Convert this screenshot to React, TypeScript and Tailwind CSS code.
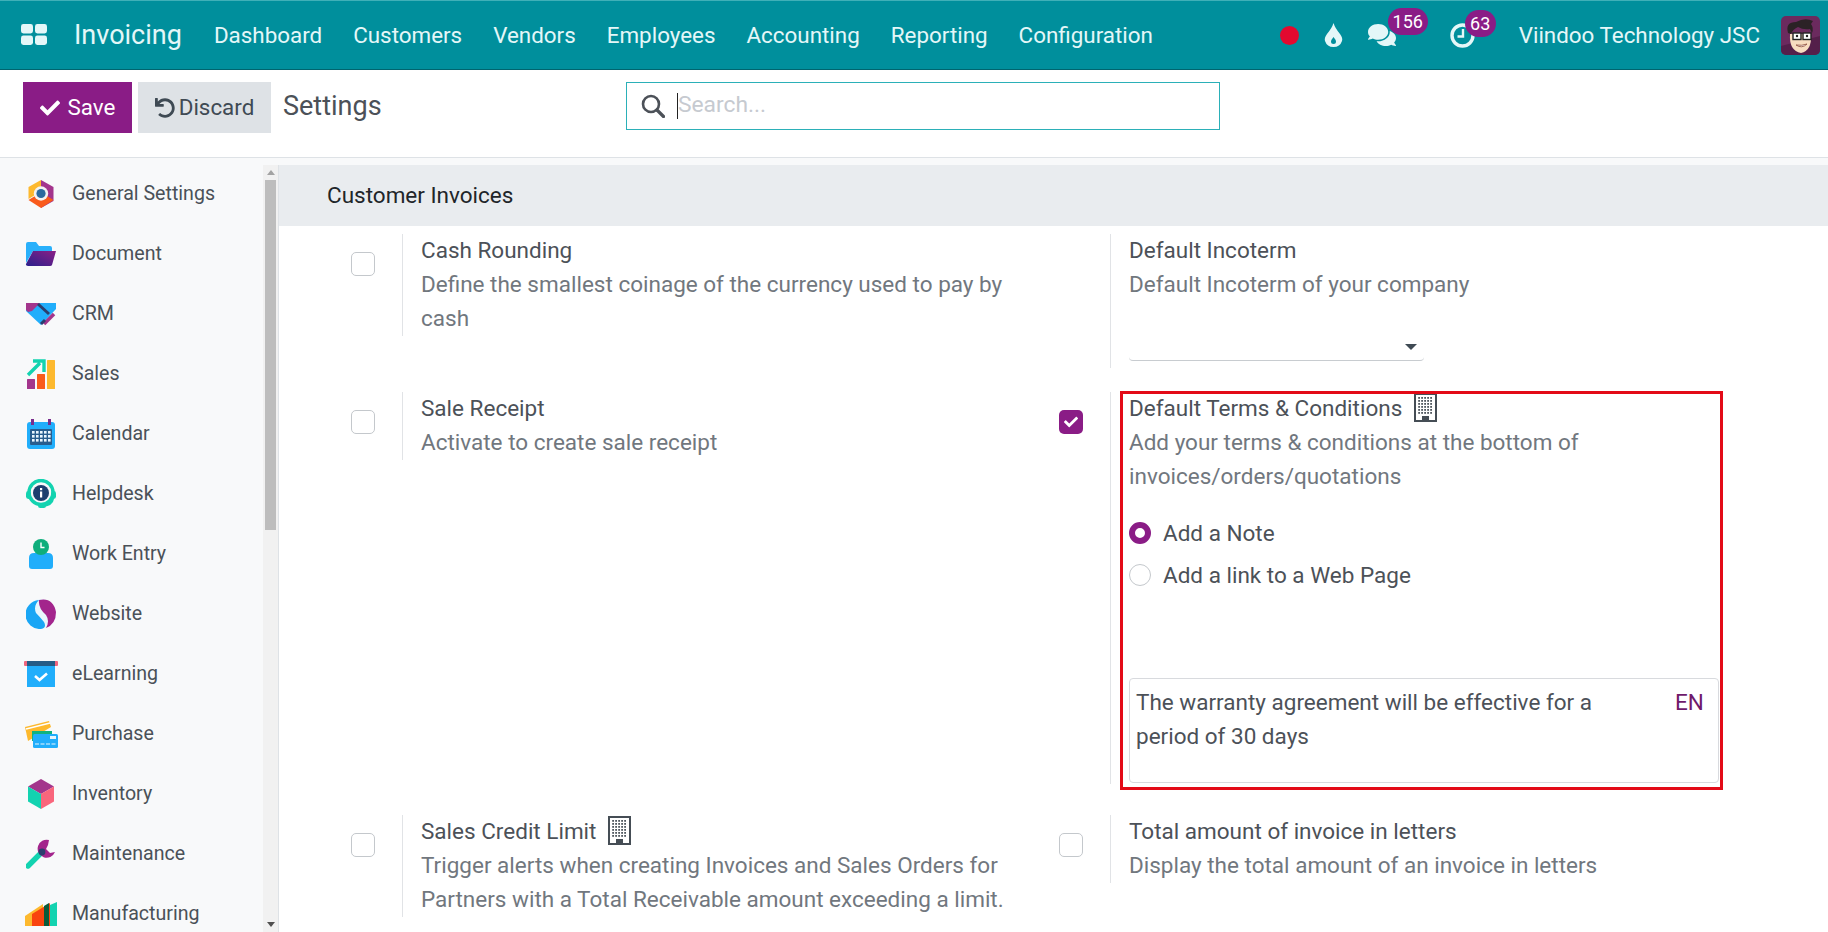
import React from "react";
import { FaCheck, FaUndo, FaComments } from "react-icons/fa";

const Building = () => (
  <svg viewBox="0 0 23 29" className="w-[23px] h-[29px] shrink-0">
    <rect x="1" y="1" width="21" height="27" fill="#fff" stroke="#454d55" strokeWidth="2" />
    {[4, 7, 10, 13, 16, 19].map((y) =>
      [5, 8, 11, 14, 17].map((x) => <rect key={`${x}-${y}`} x={x - 0.8} y={y} width="1.8" height="1.8" fill="#50585f" />)
    )}
    <rect x="8" y="23" width="7" height="5" fill="#454d55" />
  </svg>
);

const GeneralIcon = () => (
  <svg viewBox="0 0 30 30" className="w-[30px] h-[30px]">
    <path d="M15 1 L27.5 8 V22 L15 29 Z" fill="#a3358c" />
    <path d="M15 1 L2.5 8 V20 L9 16 L15 8 Z" fill="#fdb92e" />
    <path d="M2.5 21 L15 29 L27.5 21 L21 17 H9 Z" fill="#f95b1c" />
    <circle cx="15" cy="14.5" r="7.2" fill="#f3f3f3" />
    <circle cx="15" cy="14.5" r="4.6" fill="#2b6a9f" />
  </svg>
);
const DocIcon = () => (
  <svg viewBox="0 0 32 26" className="w-[32px] h-[26px]">
    <defs>
      <linearGradient id="dg" x1="0" x2="1" y1="1" y2="0">
        <stop offset="0" stopColor="#2a1f8c" />
        <stop offset="1" stopColor="#8a1f86" />
      </linearGradient>
    </defs>
    <path d="M1 3 Q1 1 3 1 H11 L14 5 H25 Q27 5 27 7 V10 H8 L1 22 Z" fill="#29b0fb" />
    <path d="M8 10 H31 L27 24 Q26.5 25 25 25 H3 Q0.5 25 1 23 Z" fill="url(#dg)" />
  </svg>
);
const CrmIcon = () => (
  <svg viewBox="0 0 30 24" className="w-[30px] h-[24px]">
    <path d="M0 1 H30 V7 L15 23 L0 9 Z" fill="#21aefb" />
    <path d="M0 1 H14 L6 9 L2 10 L0 8 Z" fill="#a3358c" />
    <path d="M12 2 L23 12" stroke="#2c3e6d" strokeWidth="3" />
    <path d="M18 22 L28 12" stroke="#a3358c" strokeWidth="3.5" />
    <path d="M15 22 L19 18" stroke="#2c3e6d" strokeWidth="3" />
  </svg>
);
const SalesIcon = () => (
  <svg viewBox="0 0 30 30" className="w-[30px] h-[30px]">
    <rect x="1" y="20" width="8" height="10" rx="0.5" fill="#a3358c" />
    <rect x="11" y="15" width="8" height="15" rx="0.5" fill="#f95b1c" />
    <rect x="21" y="1" width="8" height="29" rx="0.5" fill="#fdb92e" />
    <path d="M2 16 L14 4 M7 2 H18 V13" fill="none" stroke="#13d3b0" strokeWidth="3.4" />
  </svg>
);
const CalendarIcon = () => (
  <svg viewBox="0 0 30 30" className="w-[30px] h-[30px]">
    <rect x="1" y="3" width="28" height="27" rx="3" fill="#21aefb" />
    <rect x="5" y="0" width="3" height="6" fill="#7a2c8c" />
    <rect x="22" y="0" width="3" height="6" fill="#7a2c8c" />
    <rect x="4" y="10" width="22" height="16" rx="1" fill="#285d8e" />
    {[12, 16, 20].map((y) =>
      [6, 10, 14, 18, 22].map((x) => <rect key={`${x}-${y}`} x={x} y={y} width="2.6" height="2.6" fill="#eaf6ff" />)
    )}
  </svg>
);
const HelpIcon = () => (
  <svg viewBox="0 0 30 30" className="w-[30px] h-[30px]">
    <circle cx="15" cy="13.5" r="12" fill="none" stroke="#13d3b0" strokeWidth="3.4" />
    <rect x="0" y="12" width="5" height="8" rx="2.4" fill="#13d3b0" />
    <rect x="25" y="12" width="5" height="8" rx="2.4" fill="#13d3b0" />
    <path d="M27 19 Q26 26 16 27" fill="none" stroke="#13d3b0" strokeWidth="2.5" />
    <rect x="12" y="24.5" width="8" height="4.5" rx="2.2" fill="#13d3b0" />
    <circle cx="15" cy="14" r="8" fill="#1c3f6e" />
    <rect x="14" y="12.5" width="2.2" height="6" fill="#fff" />
    <rect x="14" y="9" width="2.2" height="2.2" fill="#fff" />
  </svg>
);
const WorkIcon = () => (
  <svg viewBox="0 0 30 32" className="w-[30px] h-[32px]">
    <path d="M3 20 Q3 15 8 15 H22 Q27 15 27 20 V28 Q27 31 24 31 H6 Q3 31 3 28 Z" fill="#21aefb" />
    <circle cx="15" cy="9" r="8" fill="#0fae7c" />
    <path d="M15 4.5 V9.5 H18.5" fill="none" stroke="#fff" strokeWidth="1.4" />
  </svg>
);
const WebIcon = () => (
  <svg viewBox="0 0 30 30" className="w-[30px] h-[30px]">
    <circle cx="15" cy="15" r="15" fill="#e8f6fd" />
    <path d="M13 1 A14.5 14.5 0 0 0 15 30 Q21 29 18 23 Q14 18 10 14 Q7 7 13 1 Z" fill="#19a6f5" />
    <path d="M13 1 Q27 -2 30 13 Q30 25 20 29 Q24 22 20 16 Q12 9 13 1 Z" fill="#a3258c" />
  </svg>
);
const LearnIcon = () => (
  <svg viewBox="0 0 34 26" className="w-[34px] h-[26px]">
    <rect x="3" y="3" width="28" height="23" fill="#21aefb" />
    <rect x="0" y="0" width="34" height="5" rx="1" fill="#f0667e" />
    <rect x="3" y="0" width="28" height="5" fill="#255c86" />
    <path d="M11 15 L15.5 19 L23 12.5" fill="none" stroke="#fff" strokeWidth="2.6" />
  </svg>
);
const PurchaseIcon = () => (
  <svg viewBox="0 0 33 28" className="w-[33px] h-[28px]">
    <path d="M0 7 L24 1 L26 7 L3 21 Z" fill="#fdb92e" />
    <path d="M1 9 L25 3" stroke="#fff" strokeWidth="1.5" />
    <path d="M7 11 L27 11 V20 L7 21 Z" fill="#0fb37f" />
    <rect x="8" y="14" width="25" height="14" rx="1.5" fill="#21aefb" />
    <rect x="25" y="16" width="6" height="3" fill="#e8f6fd" />
    <path d="M10 24 H31" stroke="#e8f6fd" strokeWidth="1" strokeDasharray="4 1.5" />
  </svg>
);
const InvIcon = () => (
  <svg viewBox="0 0 26 30" className="w-[26px] h-[30px]">
    <path d="M13 0 L26 7.5 L13 15 L0 7.5 Z" fill="#a3358c" />
    <path d="M0 7.5 L13 15 V30 L0 22.5 Z" fill="#13d3b0" />
    <path d="M26 7.5 L13 15 V30 L26 22.5 Z" fill="#f9667c" />
  </svg>
);
const MaintIcon = () => (
  <svg viewBox="0 0 30 30" className="w-[30px] h-[30px]">
    <path d="M2 27 L17 12" stroke="#13d3b0" strokeWidth="5.4" strokeLinecap="round" />
    <path d="M23 1 A9 9 0 1 0 29 13 L24 14 L20 10 L22 6 Z" fill="#a3258c" />
    <circle cx="16" cy="13" r="3.4" fill="#2c3e6d" />
  </svg>
);
const MfgIcon = () => (
  <svg viewBox="0 0 32 24" className="w-[32px] h-[24px]">
    <path d="M0 24 V14 L18 2 V24 Z" fill="#fdb92e" />
    <path d="M7 24 V12 L25 1 V24 Z" fill="#f9440f" />
    <path d="M19 24 V4 L24 1 V24 Z" fill="#0a5c3a" />
    <path d="M25 24 V3 L32 0 V24 Z" fill="#13d3b0" />
  </svg>
);

const sideItems: [string, React.ComponentType][] = [
  ["General Settings", GeneralIcon],
  ["Document", DocIcon],
  ["CRM", CrmIcon],
  ["Sales", SalesIcon],
  ["Calendar", CalendarIcon],
  ["Helpdesk", HelpIcon],
  ["Work Entry", WorkIcon],
  ["Website", WebIcon],
  ["eLearning", LearnIcon],
  ["Purchase", PurchaseIcon],
  ["Inventory", InvIcon],
  ["Maintenance", MaintIcon],
  ["Manufacturing", MfgIcon],
];

const Box = ({ checked }: { checked?: boolean }) =>
  checked ? (
    <div className="w-[24px] h-[24px] rounded-[5px] bg-[#8a1c86] flex items-center justify-center text-white text-[14px]">
      <FaCheck />
    </div>
  ) : (
    <div className="w-[24px] h-[24px] rounded-[5px] border border-[#c4c8cc] bg-white" />
  );

const Setting = ({
  checkbox,
  title,
  building,
  children,
  className,
}: {
  checkbox?: "on" | "off";
  title: string;
  building?: boolean;
  children: React.ReactNode;
  className?: string;
}) => (
  <div className={`flex ${className ?? ""}`}>
    <div className="w-[51px] shrink-0 pt-[18px]">{checkbox && <Box checked={checkbox === "on"} />}</div>
    <div className="w-[609px] border-l border-[#e1e3e6] pl-[18px]">
      <div className="-mt-[1px] pb-[1px]">
        <div className="flex items-start h-[34px] text-[#4c5158]">
          <span>{title}</span>
          {building && <span className="ml-[12px] mt-[2px]"><Building /></span>}
        </div>
        {children}
      </div>
    </div>
  </div>
);

const Desc = ({ children }: { children: React.ReactNode }) => <div className="text-[#71777e]">{children}</div>;

export default function App() {
  return (
    <div className="h-screen w-full overflow-hidden flex flex-col font-[Roboto,sans-serif] bg-white">
      <nav className="h-[70px] shrink-0 flex items-center bg-[#008f9c] border-b border-[#00646e] border-t border-t-[#3fb0b8] text-[#e4f7f8] text-[22.4px] pl-[21px] pr-[8px]">
        <svg viewBox="0 0 26 21" className="w-[26px] h-[21px] shrink-0 mb-[2px]">
          <rect x="0" y="0" width="12" height="9.5" rx="2.4" fill="#e4f7f8" />
          <rect x="14" y="0" width="12" height="9.5" rx="2.4" fill="#e4f7f8" />
          <rect x="0" y="11.5" width="12" height="9.5" rx="2.4" fill="#e4f7f8" />
          <rect x="14" y="11.5" width="12" height="9.5" rx="2.4" fill="#e4f7f8" />
        </svg>
        <span className="ml-[27px] text-[27px] mr-[32px]">Invoicing</span>
        <div className="flex gap-[31px] pt-[1px]">
          {["Dashboard", "Customers", "Vendors", "Employees", "Accounting", "Reporting", "Configuration"].map((t) => (
            <span key={t}>{t}</span>
          ))}
        </div>
        <div className="ml-auto flex items-center">
          <div className="w-[19px] h-[19px] rounded-full bg-[#e3092f]" />
          <svg viewBox="0 0 19 24" className="w-[19px] h-[24px] ml-[25px]">
            <path fillRule="evenodd" d="M9.5 0 Q11 5 16 11 Q19 15 18 18 Q16 24 9.5 24 Q3 24 1 18 Q0 15 3 11 Q8 5 9.5 0 Z M9.5 14 Q7 17 7 18.5 Q7 21 9.5 21 Q12 21 12 18.5 Q12 17 9.5 14 Z" fill="#e4f7f8" />
          </svg>
          <div className="relative ml-[25px] w-[28px] h-[26px]">
            <FaComments className="w-[28px] h-[26px] text-[#e4f7f8]" />
            <span className="absolute left-[20px] top-[-14px] w-[40px] h-[27px] rounded-full bg-[#8a1c86] text-white text-[18px] leading-[27px] text-center">156</span>
          </div>
          <div className="relative ml-[54px] w-[25px] h-[25px]">
            <svg viewBox="0 0 25 25" className="w-[25px] h-[25px]">
              <circle cx="12.5" cy="12.5" r="10.5" fill="none" stroke="#e4f7f8" strokeWidth="3.4" />
              <path d="M13 6 V13.5 H7.5" fill="none" stroke="#e4f7f8" strokeWidth="2.4" />
            </svg>
            <span className="absolute left-[15px] top-[-13px] w-[31px] h-[27px] rounded-full bg-[#8a1c86] text-white text-[18px] leading-[27px] text-center">63</span>
          </div>
          <span className="ml-[44px] mr-[21px] pt-[1px]">Viindoo Technology JSC</span>
          <svg viewBox="0 0 39 39" className="w-[39px] h-[39px] rounded-[5px]">
            <rect width="39" height="39" fill="#6b2a5e" />
            <path d="M0 39 V30 L39 20 V39 Z" fill="#541f4a" />
            <path d="M9 18 Q8 35 20 37 Q31 35 30 18 Z" fill="#f7dcc0" />
            <path d="M7 17 Q4 6 15 6 Q24 1 32 5 L30 8 Q33 12 31 17 L29 13 Q22 14 17 11 Q12 13 10 18 Z" fill="#2b2226" />
            <rect x="12" y="17" width="8" height="6.5" fill="#fff" stroke="#222" strokeWidth="1.4" />
            <rect x="22" y="17" width="8" height="6.5" fill="#fff" stroke="#222" strokeWidth="1.4" />
            <circle cx="16" cy="20" r="1.2" fill="#222" />
            <circle cx="26" cy="20" r="1.2" fill="#222" />
            <path d="M15 29 Q21 33 26 28 Q21 30 15 29 Z" fill="#fff" stroke="#8c4a3a" strokeWidth="0.8" />
          </svg>
        </div>
      </nav>

      <div className="h-[88px] shrink-0 border-b border-[#dee2e6] flex items-start pt-[12px] text-[22.4px]">
        <div className="w-[626px] shrink-0 pl-[23px] flex items-start">
          <button className="w-[109px] h-[51px] bg-[#8a1c86] text-white flex items-center justify-center gap-[8px]">
            <FaCheck className="text-[20px]" />
            <span>Save</span>
          </button>
          <button className="ml-[6px] w-[133px] h-[51px] bg-[#dee2e6] text-[#3f4a54] flex items-center justify-center gap-[4px]">
            <FaUndo className="text-[20px]" />
            <span>Discard</span>
          </button>
          <span className="ml-[12px] h-[51px] leading-[49px] text-[27px] text-[#4c5158]">Settings</span>
        </div>
        <div className="w-[594px] h-[48px] border border-[#2bb0b8] flex items-center pl-[14px]">
          <svg viewBox="0 0 24 24" className="w-[24px] h-[24px] shrink-0 mb-[1px]">
            <circle cx="10" cy="10" r="8" fill="none" stroke="#4c5158" strokeWidth="2.6" />
            <path d="M16 16 L22.5 22.5" stroke="#4c5158" strokeWidth="3.2" strokeLinecap="round" />
          </svg>
          <span className="ml-[12px] w-px h-[26px] bg-[#222]" />
          <span className="text-[#c6cad0] mb-[1px] text-[22.8px]">Search...</span>
        </div>
      </div>

      <div className="flex-1 min-h-0 flex bg-[#f8f9fa]">
        <aside className="w-[263px] shrink-0 pt-[6px] text-[19.6px] text-[#4a5158]">
          {sideItems.map(([label, Icon]) => (
            <div key={label} className="h-[60px] flex items-center">
              <div className="w-[34px] ml-[24px] flex justify-center items-center shrink-0"><Icon /></div>
              <span className="ml-[14px]">{label}</span>
            </div>
          ))}
        </aside>
        <div className="w-[16px] shrink-0 mt-[7px] bg-[#f1f1f1] border-r border-[#dee2e6] flex flex-col items-center">
          <div className="h-[15px] flex items-center justify-center">
            <div className="w-0 h-0 border-x-[4px] border-x-transparent border-b-[5px] border-b-[#a3a3a3]" />
          </div>
          <div className="w-[11px] h-[350px] bg-[#bdbdbd]" />
          <div className="flex-1" />
          <div className="h-[15px] flex items-center justify-center">
            <div className="w-0 h-0 border-x-[4px] border-x-transparent border-t-[5px] border-t-[#505050]" />
          </div>
        </div>
        <main className="flex-1 min-w-0 mt-[7px] bg-white overflow-hidden text-[22.5px] leading-[34px]">
          <div className="h-[61px] bg-[#e9ecef] pl-[48px] pb-[2px] flex items-center text-[#212529]">Customer Invoices</div>
          <div className="ml-[72px] mt-[8px] grid grid-cols-[708px_1fr] gap-y-[24px]">
            <Setting checkbox="off" title="Cash Rounding" className="items-start">
              <Desc>Define the smallest coinage of the currency used to pay by cash</Desc>
            </Setting>
            <Setting title="Default Incoterm">
              <Desc>Default Incoterm of your company</Desc>
              <div className="mt-[18px] w-[295px] h-[42px] border-b border-[#c8ccd0] rounded-b-[4px] flex items-end justify-end pr-[7px] pb-[10px]">
                <div className="w-0 h-0 border-x-[6px] border-x-transparent border-t-[6px] border-t-[#3f4a54]" />
              </div>
              <div className="h-[6px]" />
            </Setting>

            <Setting checkbox="off" title="Sale Receipt" className="items-start">
              <Desc>Activate to create sale receipt</Desc>
            </Setting>
            <div className="relative mb-[7px]">
              <Setting checkbox="on" title="Default Terms & Conditions" building>
                <Desc>Add your terms &amp; conditions at the bottom of invoices/orders/quotations</Desc>
                <div className="mt-[19px] text-[#4c5158]">
                  <div className="h-[42px] flex items-center gap-[12px]">
                    <span className="w-[22px] h-[22px] rounded-full border-[6px] border-[#8a1c86] bg-white shrink-0" />
                    <span>Add a Note</span>
                  </div>
                  <div className="h-[42px] flex items-center gap-[12px]">
                    <span className="w-[22px] h-[22px] rounded-full border border-[#c4c8cc] bg-white shrink-0" />
                    <span>Add a link to a Web Page</span>
                  </div>
                </div>
                <div className="relative mt-[82px] w-[590px] h-[105px] border border-[#d8dade] rounded-[4px] pt-[6px] pl-[6px] pr-[78px] text-[#4c5158]">
                  The warranty agreement will be effective for a period of 30 days
                  <span className="absolute left-[545px] top-[6px] text-[#6f1a6b]">EN</span>
                </div>
              </Setting>
              <div className="absolute left-[61px] -top-[1px] w-[603px] h-[399px] border-[3px] border-[#e30a17] pointer-events-none" />
            </div>

            <Setting checkbox="off" title="Sales Credit Limit" building className="items-start">
              <Desc>Trigger alerts when creating Invoices and Sales Orders for Partners with a Total Receivable amount exceeding a limit.</Desc>
            </Setting>
            <Setting checkbox="off" title="Total amount of invoice in letters" className="items-start">
              <Desc>Display the total amount of an invoice in letters</Desc>
            </Setting>
          </div>
        </main>
      </div>
    </div>
  );
}
